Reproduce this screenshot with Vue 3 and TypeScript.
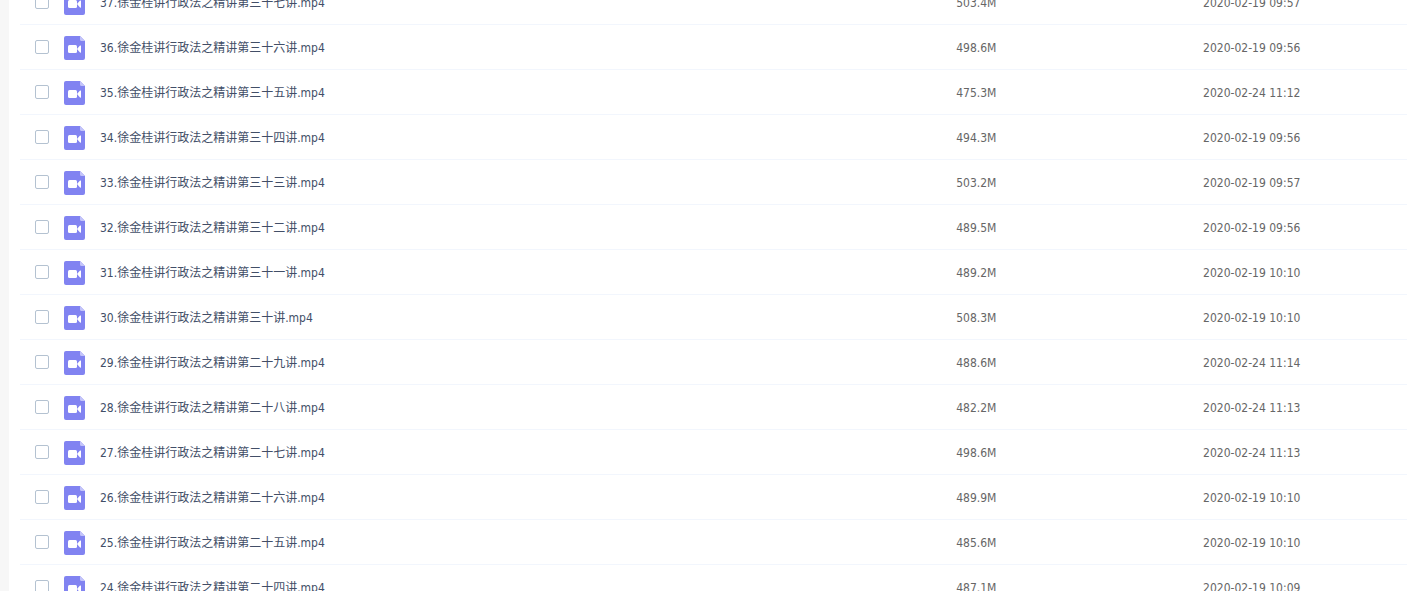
<script setup lang="ts">
import { ref } from 'vue'

interface VideoFile {
  no: number
  ordinal: string
  size: string
  modified: string
}

const files: VideoFile[] = [
  { no: 37, ordinal: '三十七', size: '503.4M', modified: '2020-02-19 09:57' },
  { no: 36, ordinal: '三十六', size: '498.6M', modified: '2020-02-19 09:56' },
  { no: 35, ordinal: '三十五', size: '475.3M', modified: '2020-02-24 11:12' },
  { no: 34, ordinal: '三十四', size: '494.3M', modified: '2020-02-19 09:56' },
  { no: 33, ordinal: '三十三', size: '503.2M', modified: '2020-02-19 09:57' },
  { no: 32, ordinal: '三十二', size: '489.5M', modified: '2020-02-19 09:56' },
  { no: 31, ordinal: '三十一', size: '489.2M', modified: '2020-02-19 10:10' },
  { no: 30, ordinal: '三十', size: '508.3M', modified: '2020-02-19 10:10' },
  { no: 29, ordinal: '二十九', size: '488.6M', modified: '2020-02-24 11:14' },
  { no: 28, ordinal: '二十八', size: '482.2M', modified: '2020-02-24 11:13' },
  { no: 27, ordinal: '二十七', size: '498.6M', modified: '2020-02-24 11:13' },
  { no: 26, ordinal: '二十六', size: '489.9M', modified: '2020-02-19 10:10' },
  { no: 25, ordinal: '二十五', size: '485.6M', modified: '2020-02-19 10:10' },
  { no: 24, ordinal: '二十四', size: '487.1M', modified: '2020-02-19 10:09' },
]

const selected = ref<number[]>([])
</script>

<template>
  <main class="panel">
    <table class="files">
      <colgroup>
        <col class="col-name" />
        <col class="col-size" />
        <col />
      </colgroup>
      <tbody>
        <tr v-for="file in files" :key="file.no">
          <td>
            <div class="entry">
              <input :id="`file-${file.no}`" v-model="selected" class="tick" type="checkbox" :value="file.no" />
              <svg class="icon" viewBox="0 0 21 24" aria-hidden="true">
                <path d="M2 0H16L21 5V22Q21 24 19 24H2Q0 24 0 22V2Q0 0 2 0Z" fill="#8183f1" />
                <path d="M16 0L21 5H17.500Q16 5 16 3.500Z" fill="#c3c4fa" />
                <rect x="4" y="9" width="9" height="8" rx="1.500" fill="#fff" />
                <path d="M13 13L16 9.600Q17 9 17 10V16Q17 17 16 16.400Z" fill="#fff" />
              </svg>
              <label class="name" :for="`file-${file.no}`">{{ file.no }}.徐金桂讲行政法之精讲第{{ file.ordinal }}讲.mp4</label>
            </div>
          </td>
          <td class="detail">{{ file.size }}</td>
          <td class="detail">{{ file.modified }}</td>
        </tr>
      </tbody>
    </table>
  </main>
</template>

<style>
body {
  background: #fff;
}
</style>

<style scoped>
.panel {
  box-sizing: border-box;
  height: 100vh;
  overflow: hidden;
  padding-left: 11px;
  border-left: 9px solid #f7f7f7;
  font: 12px/16px "DejaVu Sans Condensed", "Noto Sans CJK SC", sans-serif;
  color: #666;
}

/* The list is scrolled part of the way through its first row. */
.files {
  width: 100%;
  margin-top: -20px;
  border-collapse: separate;
  border-spacing: 0;
  table-layout: fixed;
}

.col-name {
  width: 67.5%;
}

.col-size {
  width: 17.8%;
}

td {
  box-sizing: border-box;
  height: 45px;
  padding: 0;
  border-bottom: 1px solid #f2f6fd;
  white-space: nowrap;
}

.detail {
  padding-top: 2px;
}

.entry {
  display: flex;
  align-items: center;
  padding-left: 15px;
}

.tick {
  appearance: none;
  box-sizing: border-box;
  flex: none;
  width: 14px;
  height: 14px;
  margin: 0 15px 0 0;
  border: 1px solid #b4c2d1;
  border-radius: 2px;
  background: #fff;
}

.tick:checked {
  background: #8183f1;
}

.icon {
  flex: none;
  width: 21px;
  height: 24px;
  margin: 2px 15px 0 0;
}

.name {
  padding-top: 2px;
  color: #424e67;
}
</style>
